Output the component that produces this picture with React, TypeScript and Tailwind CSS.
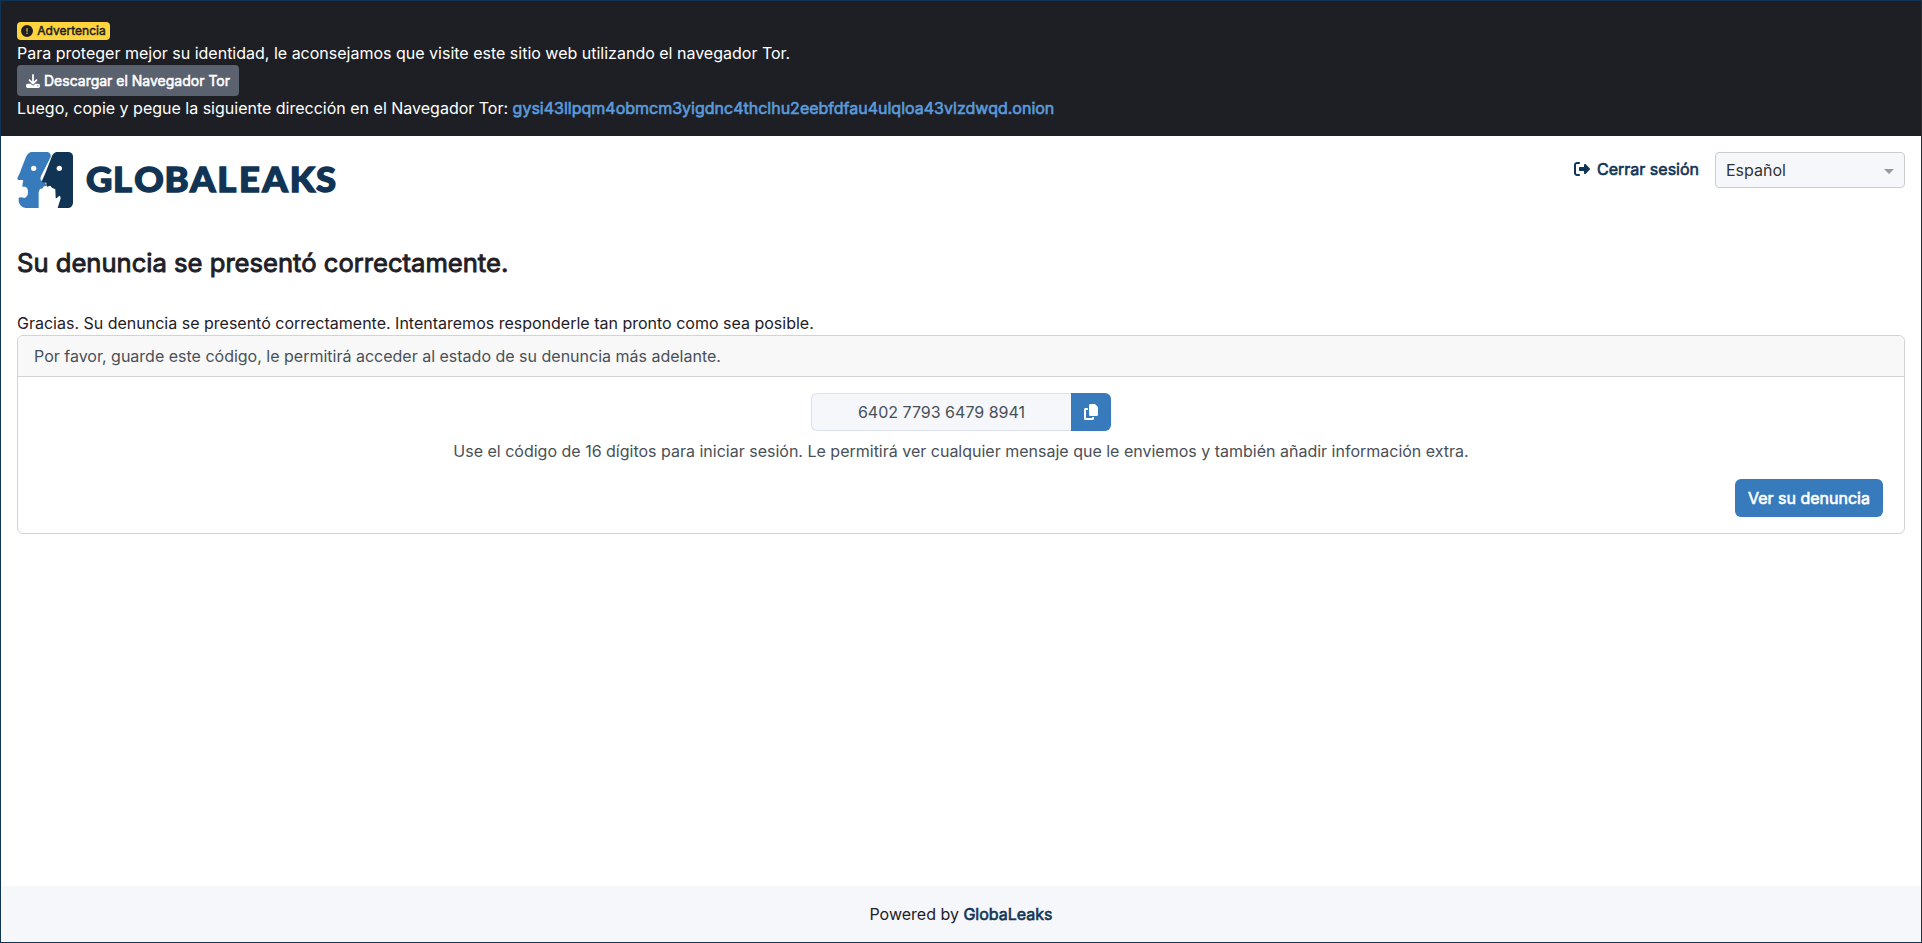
import { FaCircleExclamation, FaDownload, FaRightFromBracket, FaCopy } from "react-icons/fa6";

function Logo() {
  return (
    <svg width="330" height="56" viewBox="0 0 990 168" role="img" aria-label="GlobaLeaks">
      <path
        fill="#377bbc"
        d="M42 0H92Q103 3 101 15L72 72Q68 81 73 86L82 88L89 102L81 103L75 110L69 110L65 121V168H26Q8 165 5 148V137Q11 134 23 138Q33 134 33 120Q33 107 25 104H17Q14 101 17 98V93L19 86L17 84H6Q0 84 1 79Q9 64 15 45L27 15Q32 3 42 0Z"
      />
      <path
        fill="#113455"
        d="M118 0H155Q168 2 168 14V154Q166 166 155 168H122L131 139Q131 131 127 131L119 139L116 138L115 112L105 107L100 101L90 104L88 98L88 92L77 91Q73 89 76 84Q84 67 90 51L103 17Q107 3 118 0Z"
      />
      <circle cx="50" cy="49" r="8" fill="#fff" />
      <circle cx="127" cy="49" r="8" fill="#fff" />
      <text
        x="195.5 271.7 331.5 417.5 489.5 567 628 694.5 772 846"
        y="120"
        transform="scale(1.06 1)"
        fill="#113455"
        stroke="#113455"
        strokeWidth="4"
        fontSize="103"
        className="font-['Lato',sans-serif] font-black"
      >
        GLOBALEAKS
      </text>
    </svg>
  );
}

export default function App() {
  return (
    <div className="flex h-[943px] flex-col border border-[#113455] bg-white font-['Inter',sans-serif] text-base leading-6 text-[#1f2026]">
      <div className="h-[135px] shrink-0 bg-[#1e1f24] p-4 text-white">
        <div className="flex h-6 items-center pt-1">
          <span className="flex h-[18px] w-[93px] items-center justify-center gap-1 rounded bg-[#ffd43c] text-xs text-[#1e1f24]">
            <FaCircleExclamation className="size-3" />
            <span className="[-webkit-text-stroke:0.48px_currentColor]">Advertencia</span>
          </span>
        </div>
        <div>Para proteger mejor su identidad, le aconsejamos que visite este sitio web utilizando el navegador Tor.</div>
        <button className="flex h-[31px] w-[222px] items-center justify-center gap-1 rounded bg-[#5a6270] text-sm">
          <FaDownload className="size-3.5" />
          <span className="[-webkit-text-stroke:0.55px_currentColor]">Descargar el Navegador Tor</span>
        </button>
        <div>
          Luego, copie y pegue la siguiente dirección en el Navegador Tor:{" "}
          <a className="text-[#5a9bdc] [-webkit-text-stroke:0.62px_currentColor]">
            gysi43llpqm4obmcm3yigdnc4thclhu2eebfdfau4ulqloa43vlzdwqd.onion
          </a>
        </div>
      </div>

      <header className="flex h-[88px] shrink-0 items-start justify-between p-4">
        <Logo />
        <div className="flex items-start gap-4">
          <a className="flex h-[34px] items-center gap-[7px] text-[#113455]">
            <FaRightFromBracket className="size-4" />
            <span className="[-webkit-text-stroke:0.62px_currentColor]">Cerrar sesión</span>
          </a>
          <div className="flex h-9 w-[190px] items-center justify-between rounded border border-[#ccc] bg-[#f5f7fb] px-2.5 text-[#333]">
            <span>Español</span>
            <span className="mt-0.5 border-x-[5px] border-t-[5px] border-x-transparent border-t-[#999]" />
          </div>
        </div>
      </header>

      <main className="flex grow flex-col px-4 pt-[23px]">
        <h1 className="text-[25.6px] leading-[32px] [-webkit-text-stroke:0.9px_currentColor]">
          Su denuncia se presentó correctamente.
        </h1>
        <p className="mt-8">
          Gracias. Su denuncia se presentó correctamente. Intentaremos responderle tan pronto como sea posible.
        </p>
        <section className="flex h-[199px] flex-col rounded-md border border-[#d2d3d4] text-[#495057]">
          <div className="flex h-[41px] shrink-0 items-center rounded-t-md border-b border-[#d2d3d4] bg-[#f8f8f8] px-4">
            Por favor, guarde este código, le permitirá acceder al estado de su denuncia más adelante.
          </div>
          <div className="flex flex-col items-center pt-4">
            <div className="flex h-[38px] w-[300px]">
              <div className="flex grow items-center justify-center rounded-l-md border border-r-0 border-[#dbe0ea] bg-[#f5f7fb]">
                6402 7793 6479 8941
              </div>
              <button className="flex w-10 items-center justify-center rounded-r-md bg-[#377bbc] text-white">
                <FaCopy className="size-4" />
              </button>
            </div>
            <p className="mt-2">
              Use el código de 16 dígitos para iniciar sesión. Le permitirá ver cualquier mensaje que le enviemos y también añadir información extra.
            </p>
            <button className="mt-4 mr-[21px] h-[38px] w-[148px] self-end rounded-md bg-[#377bbc] text-white [-webkit-text-stroke:0.62px_currentColor]">
              Ver su denuncia
            </button>
          </div>
        </section>
      </main>

      <footer className="flex h-14 shrink-0 items-center justify-center bg-[#f5f7fb]">
        <p>
          Powered by <a className="text-[#113455] [-webkit-text-stroke:0.62px_currentColor]">GlobaLeaks</a>
        </p>
      </footer>
    </div>
  );
}
